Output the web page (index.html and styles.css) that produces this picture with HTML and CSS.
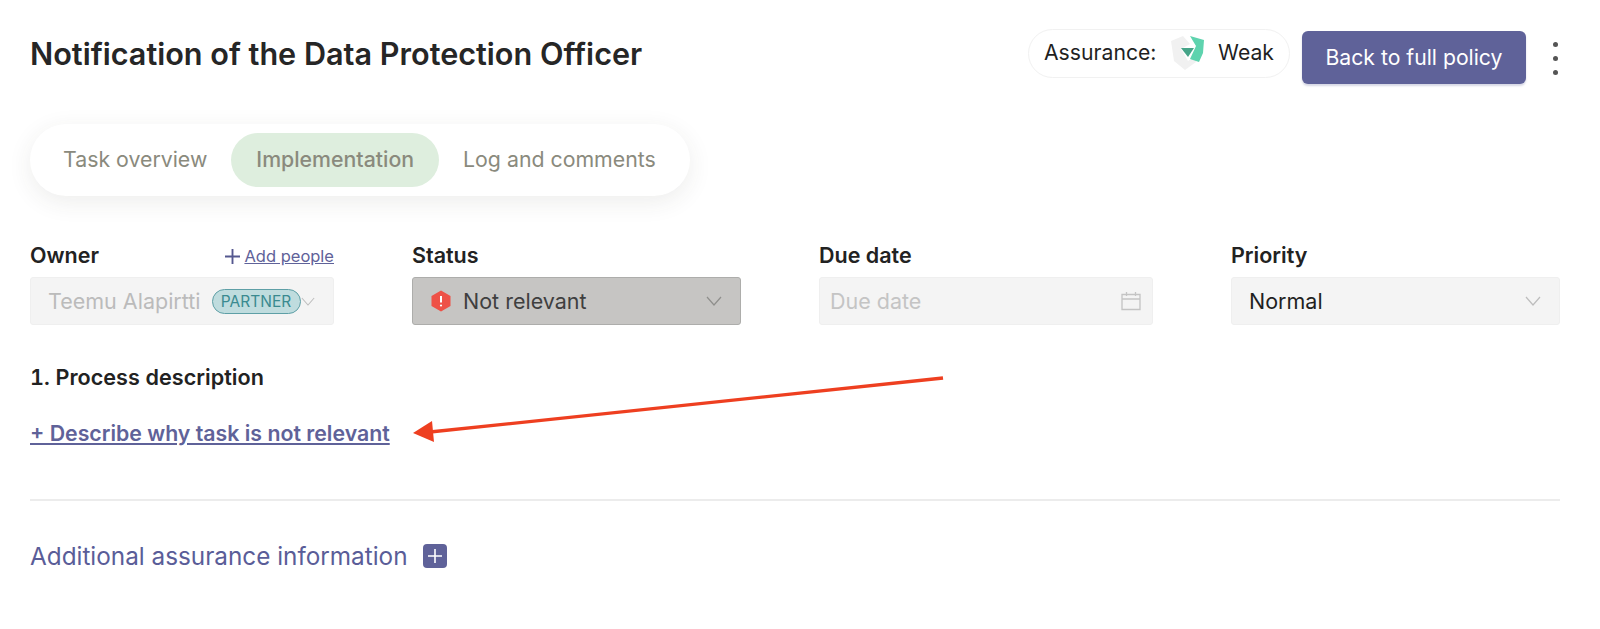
FILE: index.html
```html
<!DOCTYPE html>
<html lang="en">
<head>
<meta charset="utf-8">
<title>Notification of the Data Protection Officer</title>
<link rel="stylesheet" href="styles.css">
</head>
<body>
<main class="page">
  <header class="head">
    <h1 class="title">Notification of the Data Protection Officer</h1>
    <div class="head-actions">
      <div class="assurance">
        <span>Assurance:</span>
        <svg class="shield" viewBox="0 0 36 36" width="36" height="36" aria-hidden="true">
          <path d="M2 6 L14 1 L21 9 L12 14 L19 26 L29 20 L27 27 L16 35 L5 26 Z" fill="#f1f1f1"/>
          <path d="M21 1 L35 5 L34 18 L30 27 L21 24 L27 11 Z" fill="#5ed3ae"/>
          <path d="M12 13 L25 13 L19 22 Z" fill="#46a488"/>
        </svg>
        <span>Weak</span>
      </div>
      <button class="back">Back to full policy</button>
      <div class="kebab"><i></i><i></i><i></i></div>
    </div>
  </header>

  <nav class="tabs">
    <a class="tab">Task overview</a>
    <a class="tab active">Implementation</a>
    <a class="tab">Log and comments</a>
  </nav>

  <section class="fields">
    <div class="field owner">
      <div class="label-row">
        <label>Owner</label>
        <span class="add"><svg viewBox="0 0 16 16" width="15" height="15" aria-hidden="true"><path d="M8 0v16M0 8h16" stroke="#55588f" stroke-width="2" fill="none"/></svg><a>Add people</a></span>
      </div>
      <div class="box muted">
        <span class="owner-name">Teemu Alapirtti</span>
        <span class="badge">PARTNER</span>
        <svg class="chev tight" viewBox="0 0 16 10" width="14" height="9" aria-hidden="true"><path d="M1 1l7 8 7-8" stroke="#bdbdbd" stroke-width="1.2" fill="none"/></svg>
      </div>
    </div>
    <div class="field status">
      <div class="label-row"><label>Status</label></div>
      <div class="box dark">
        <svg class="hex" viewBox="0 0 20 22" width="20" height="22" aria-hidden="true">
          <path d="M10 0.5 L19.5 6 V16 L10 21.5 L0.5 16 V6 Z" fill="#ee5147"/>
          <path d="M10 6v6.5" stroke="#fff" stroke-width="2"/><circle cx="10" cy="15.5" r="1.1" fill="#fff"/>
        </svg>
        <span class="status-text">Not relevant</span>
        <svg class="chev" viewBox="0 0 16 10" width="16" height="10" aria-hidden="true"><path d="M1 1l7 8 7-8" stroke="#8f8f8c" stroke-width="1.2" fill="none"/></svg>
      </div>
    </div>
    <div class="field due">
      <div class="label-row"><label>Due date</label></div>
      <div class="box muted date">
        <span class="placeholder">Due date</span>
        <svg class="cal" viewBox="0 0 20 20" width="20" height="20" aria-hidden="true"><path d="M1 3.500h18v15H1zM1 8h18M5.500 1v4M14.500 1v4" stroke="#c4c4c4" stroke-width="1.300" fill="none"/></svg>
      </div>
    </div>
    <div class="field priority">
      <div class="label-row"><label>Priority</label></div>
      <div class="box muted">
        <span class="priority-text">Normal</span>
        <svg class="chev" viewBox="0 0 16 10" width="16" height="10" aria-hidden="true"><path d="M1 1l7 8 7-8" stroke="#bdbdbd" stroke-width="1.2" fill="none"/></svg>
      </div>
    </div>
  </section>

  <h2 class="section-title">1. Process description</h2>
  <a class="describe">+ Describe why task is not relevant</a>

  <hr class="rule">

  <div class="additional">
    <span>Additional assurance information</span>
    <span class="plus"><svg viewBox="0 0 14 14" width="14" height="14" aria-hidden="true"><path d="M7 0v14M0 7h14" stroke="#fff" stroke-width="1.6" fill="none"/></svg></span>
  </div>
</main>

<svg class="arrow" viewBox="0 0 1600 629" width="1600" height="629" aria-hidden="true">
  <path d="M943 378 L430 432" stroke="#ee3f20" stroke-width="3.300" fill="none"/>
  <path d="M413 433 L432 421 L434 442 Z" fill="#ee3f20"/>
</svg>
</body>
</html>
```

FILE: styles.css
```css
* { box-sizing: border-box; }
html, body { margin: 0; padding: 0; background: #fff; }
body { font-family: Inter, "Liberation Sans", sans-serif; color: #222; height: 629px; overflow: hidden; position: relative; }
.page { padding: 29px 39px 0 30px; }

.head { display: flex; justify-content: space-between; align-items: flex-start; height: 95px; }
.title { margin: 2px 0 0; font-size: 30.600px; line-height: 46px; font-weight: 600; color: #262626; white-space: nowrap; }
.head-actions { display: flex; align-items: flex-start; }
.assurance { display: flex; align-items: center; height: 49px; width: 262px; padding: 0 15px 0 15px; justify-content: space-between; border: 1px solid #f1f1f1; border-radius: 25px; font-size: 21.200px; line-height: 45px; color: #1f1f1f; white-space: nowrap; }
.assurance span { margin-bottom: 2px; }
.shield { margin: 0 0 2px; }
.back { margin: 2px 0 0 12px; width: 224px; height: 53px; padding: 0 0 2px; border: 0; border-radius: 6px; background: #5f6299; color: #fff; font: 400 21.200px Inter, sans-serif; box-shadow: 0 2px 2px rgba(95, 98, 153, .25); }
.kebab { display: flex; flex-direction: column; gap: 9px; margin: 13px 3px 0 27px; }
.kebab i { width: 5px; height: 5px; border-radius: 50%; background: #555; display: block; }

.tabs { display: inline-flex; align-items: center; width: 660px; height: 72px; padding: 0 10px 0 0; border-radius: 36px; background: #fff; box-shadow: 0 6px 24px rgba(60, 60, 40, .09); }
.tab { font-size: 21.300px; color: #8a8a7d; padding: 0 24px; line-height: 52px; height: 54px; border-radius: 27px; white-space: nowrap; }
.tab:first-child { padding-left: 33px; padding-right: 24px; }
.active { background: #deeede; font-weight: 500; padding: 0 25px; }

.fields { display: flex; margin-top: 44px; }
.field { flex: none; }
.owner { width: 304px; margin-right: 78px; }
.status { width: 329px; margin-right: 78px; }
.due { width: 334px; margin-right: 78px; }
.priority { width: 329px; }
.label-row { display: flex; justify-content: space-between; align-items: center; height: 30px; margin-bottom: 7px; }
label { font-size: 21.500px; font-weight: 600; color: #222; }
.add { display: inline-flex; align-items: center; gap: 4px; margin-top: 2px; font-size: 16.500px; color: #5f6299; }
.add a { text-decoration: underline; }
.box { display: flex; align-items: center; height: 48px; border-radius: 3px; font-size: 21.500px; padding: 0 18px; }
.muted { background: #f4f4f4; border: 1px solid #efefef; }
.dark { background: #c6c5c3; border: 1px solid #adadab; padding: 0 18px 0 18px; }
.owner-name { color: #bbb; white-space: nowrap; }
.badge { margin-left: 11px; flex: none; width: 89px; height: 25px; line-height: 23px; text-align: center; border: 1px solid #5e9fa6; border-radius: 13px; background: #bfdcde; color: #3a8a90; font-size: 15.500px; }
.owner .box { padding: 0 15px 0 17px; }
.chev { margin-left: auto; flex: none; }
.chev.tight { margin-left: 0; }
.hex { flex: none; }
.status-text { margin-left: 12px; color: #3f3f3f; }
.placeholder { color: #c4c4c4; }
.due .box { padding: 0 11px 0 10px; justify-content: space-between; }
.priority .box { padding: 0 17px; }
.priority .chev { margin-right: 1px; }
.priority-text { color: #1f1f1f; }

.section-title { margin: 35px 0 0; font-size: 21.600px; line-height: 34px; font-weight: 600; color: #222; font-variant-numeric: tabular-nums; }
.describe { display: block; margin-top: 22px; width: max-content; font-size: 21.300px; line-height: 34px; font-weight: 600; color: #5f6299; text-decoration: underline; }
.rule { border: 0; height: 2px; background: #ececec; margin: 49px 1px 0 0; }
.additional { display: flex; align-items: center; gap: 15px; margin-top: 38px; font-size: 24.300px; line-height: 34px; color: #5a5d98; }
.plus { display: flex; align-items: center; justify-content: center; width: 24px; height: 24px; border-radius: 4px; background: #5f6299; }

.arrow { position: absolute; left: 0; top: 0; pointer-events: none; }
```
